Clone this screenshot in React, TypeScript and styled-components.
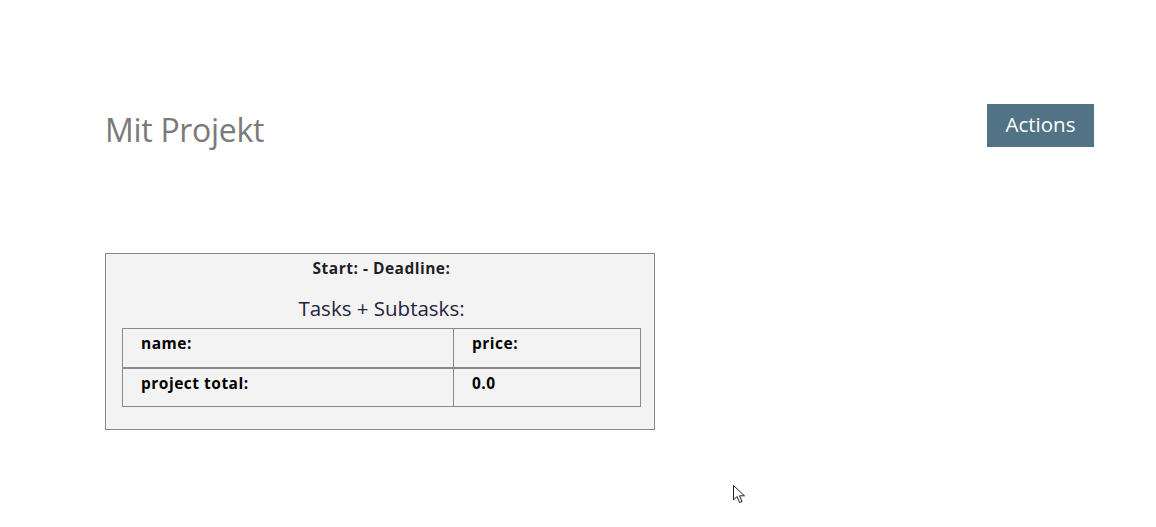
import React from "react";
import styled, { createGlobalStyle } from "styled-components";

const Global = createGlobalStyle`
  html, body { margin: 0; padding: 0; background: #fff; }
  body { font-family: "Open Sans", "Noto Sans", sans-serif; color: #222; }
`;

const Page = styled.div`
  position: relative;
  width: 1156px;
  height: 527px;
  padding: 104px 62px 0 105px;
  box-sizing: border-box;
`;

const Header = styled.div`
  display: flex;
  justify-content: space-between;
  align-items: flex-start;
`;

const Title = styled.h1`
  margin: 6px 0 0 0;
  font-size: 32px;
  font-weight: 400;
  line-height: 40px;
  color: #7a7a7a;
  letter-spacing: -0.3px;
`;

const ActionButton = styled.button`
  width: 107px;
  height: 43px;
  border: none;
  background: #527385;
  color: #fff;
  font-family: inherit;
  font-size: 20.5px;
  padding: 0 0 4px;
  cursor: pointer;
`;

const Panel = styled.div`
  margin-top: 103px;
  width: 550px;
  box-sizing: border-box;
  border: 1px solid #8a8a8a;
  background: #f3f3f3;
  padding: 4px 13px 22px 16px;
`;

const Dates = styled.div`
  text-align: center;
  font-size: 15.5px;
  letter-spacing: 0.5px;
  font-weight: 700;
  color: #1e1e28;
  line-height: 20px;
`;

const Subtitle = styled.div`
  text-align: center;
  font-size: 20.5px;
  color: #23233d;
  margin-top: 18px;
  line-height: 24px;
`;

const Table = styled.table`
  margin-top: 8px;
  width: 519px;
  border-collapse: collapse;
  border: 1px solid #8a8a8a;
`;

const Row = styled.tr<{ $top?: boolean }>`
  border-top: ${(p) => (p.$top ? "2px solid #8a8a8a" : "none")};
`;

const Cell = styled.td<{ $w?: number }>`
  border-left: 1px solid #8a8a8a;
  width: ${(p) => (p.$w ? `${p.$w}px` : "auto")};
  height: 39px;
  padding: 3px 0 0 18px;
  vertical-align: top;
  font-size: 15.5px;
  letter-spacing: 0.5px;
  font-weight: 700;
  color: #000;
  line-height: 22px;
  box-sizing: border-box;
  &:first-child { border-left: none; }
`;

const Cursor = styled.svg`
  position: absolute;
  left: 733px;
  top: 485px;
`;

export default function App() {
  return (
    <>
      <Global />
      <Page>
        <Header>
          <Title>Mit Projekt</Title>
          <ActionButton>Actions</ActionButton>
        </Header>
        <Panel>
          <Dates>Start: - Deadline:</Dates>
          <Subtitle>Tasks + Subtasks:</Subtitle>
          <Table>
            <tbody>
              <Row>
                <Cell $w={331}>name:</Cell>
                <Cell>price:</Cell>
              </Row>
              <Row $top>
                <Cell $w={331}>project total:</Cell>
                <Cell>0.0</Cell>
              </Row>
            </tbody>
          </Table>
        </Panel>
        <Cursor width="13" height="20" viewBox="0 0 13 20">
          <path d="M0.5 0.5 L0.5 15 L4 11.5 L6.5 17.5 L9 16.5 L6.5 10.8 L11.5 10.8 Z" fill="#fff" stroke="#1a1a3a" strokeWidth="1" strokeLinejoin="miter" />
        </Cursor>
      </Page>
    </>
  );
}
